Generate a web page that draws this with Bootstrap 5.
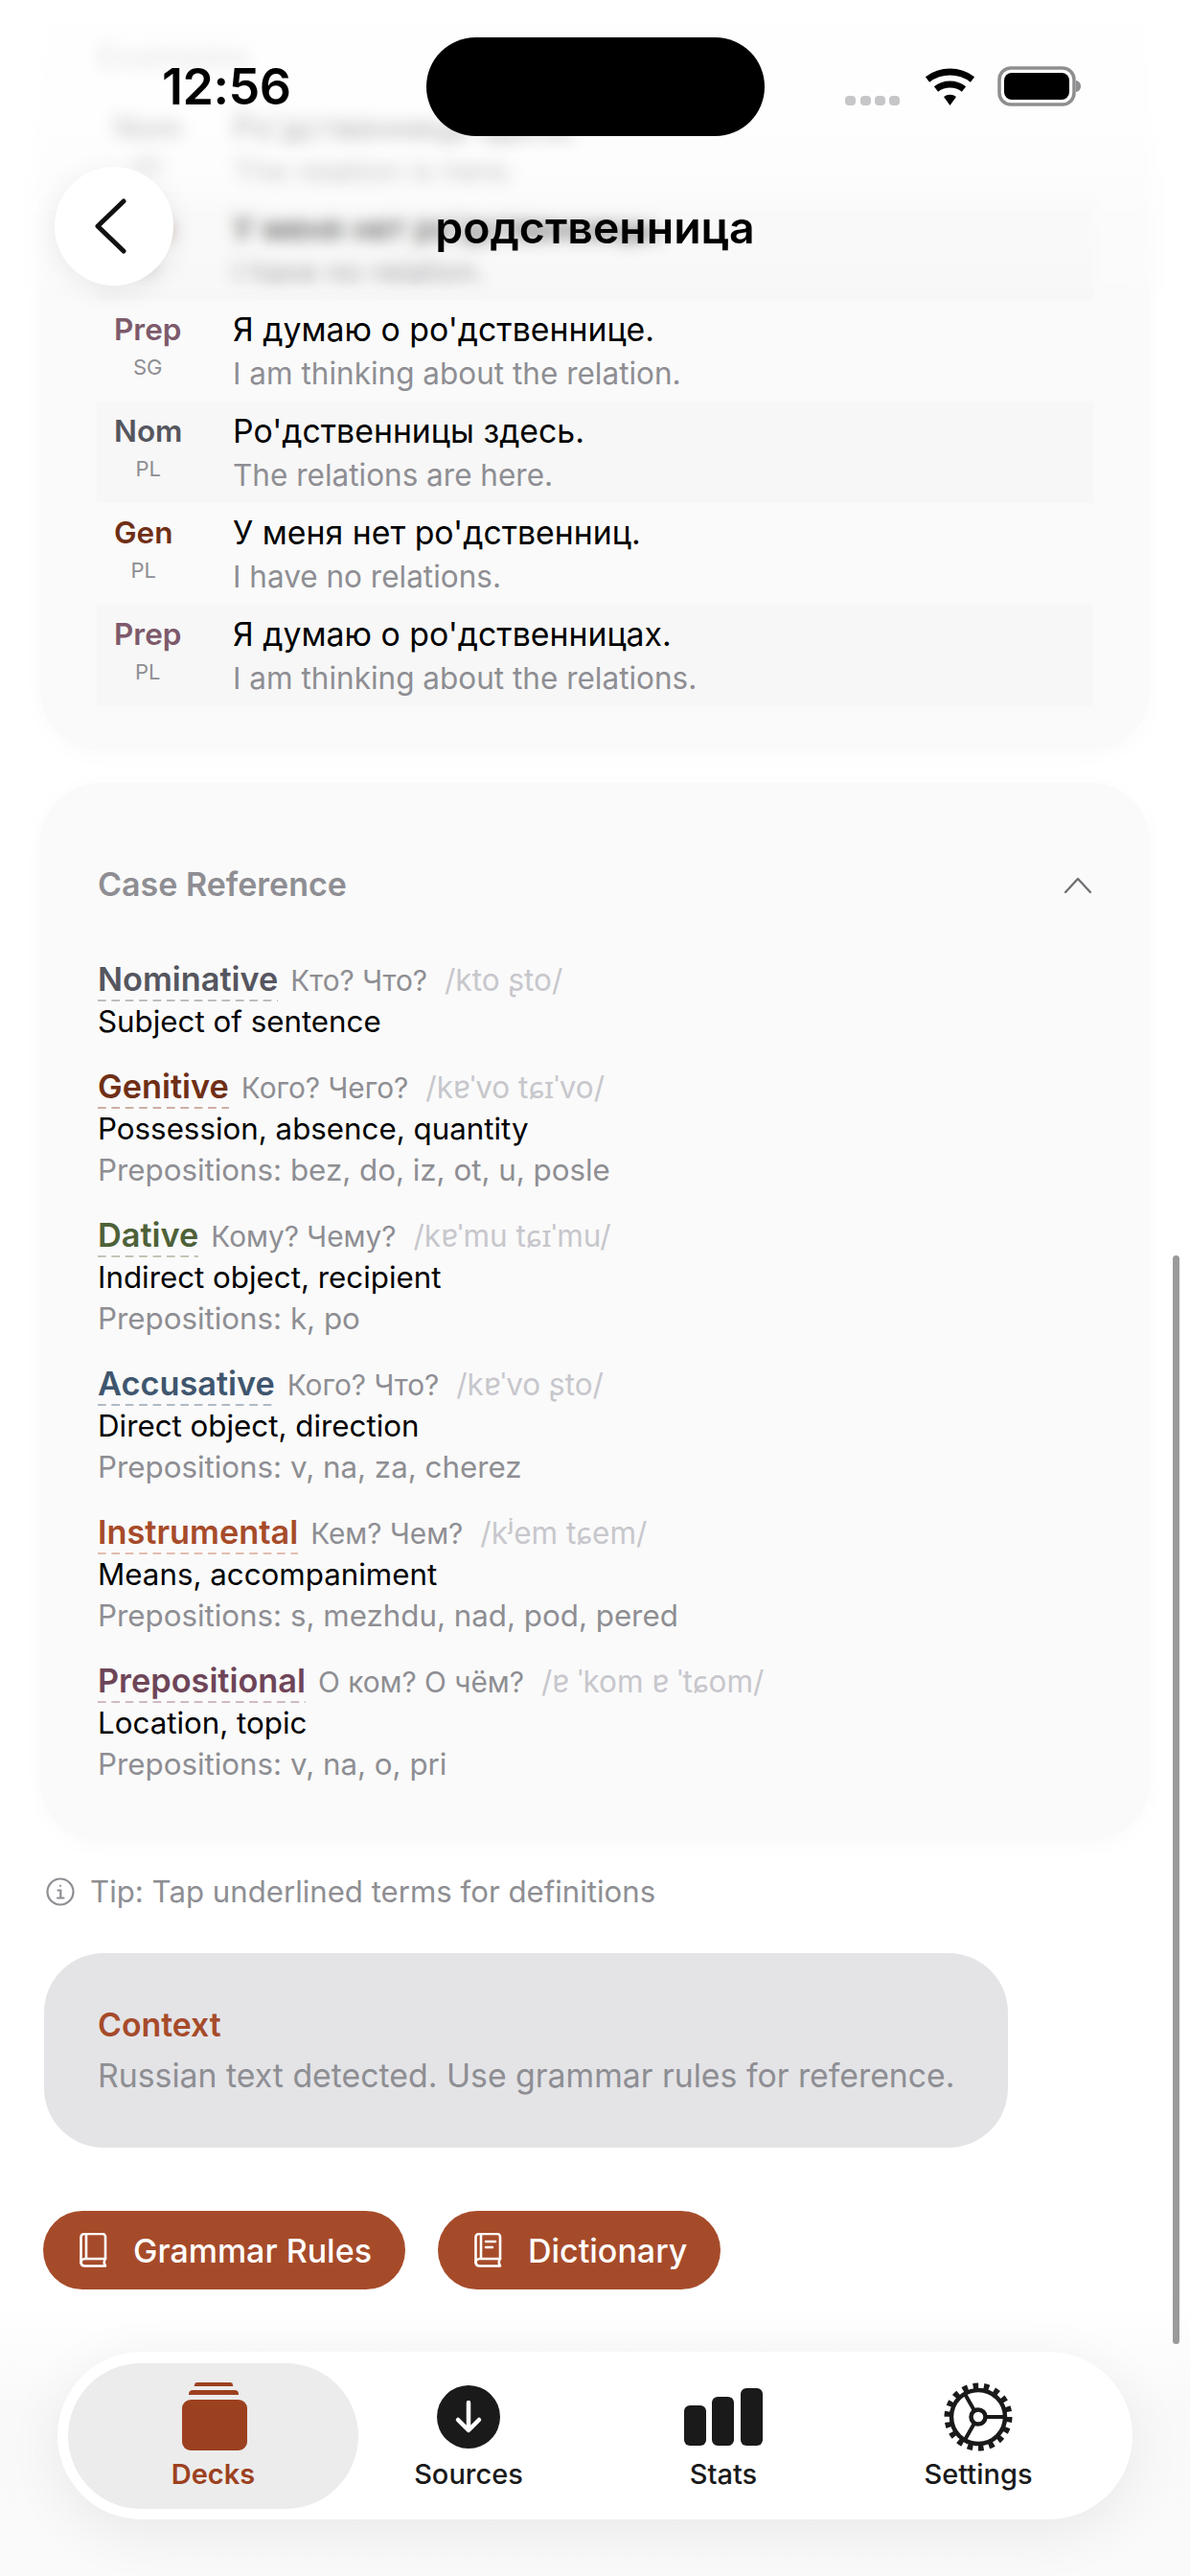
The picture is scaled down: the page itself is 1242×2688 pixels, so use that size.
<!DOCTYPE html>
<html lang="en">
<head>
<meta charset="utf-8">
<title>родственница</title>
<link href="https://cdn.jsdelivr.net/npm/bootstrap@5.3.0/dist/css/bootstrap.min.css" rel="stylesheet">
<style>
html,body{width:1242px;height:2688px;overflow:hidden;background:#fff;}
body{font-family:Inter,"Noto Sans",sans-serif;color:#000;position:relative;}
.scroll-pane{margin-top:-44px;padding:0 42px;}
.sheet{background:#fafafa;border-radius:62px;box-shadow:0 4px 24px rgba(0,0,0,.025);}
.sheet-ex{padding:82px 59px 46px 59px;}
.sheet-ref{margin-top:34px;padding:84px 60px 58px 60px;}
.sheet-title{font-size:34px;font-weight:600;line-height:44px;color:#8e8e93;}
.sheet-ex .sheet-title{padding-left:1px;height:63px;line-height:40px;}
.ex-row{height:106px;padding:9px 18px 0;}
.ex-row.shade{background:#f7f7f7;}
.ex-tag-col{width:124px;flex:none;}
.ex-tag{font-size:31.500px;font-weight:600;line-height:44px;}
.ex-num{font-size:22px;line-height:30px;color:#8e8e93;margin-top:2px;}
.ex-ru{font-size:33.800px;line-height:44px;}
.ex-en{font-size:31.500px;line-height:44px;color:#8e8e93;margin-top:2px;}
.c-nom{color:#55565f;--u:#bdbdc0;}
.c-gen{color:#6f2f16;--u:#cdaea3;}
.c-dat{color:#4e6138;--u:#bfc6b3;}
.c-acc{color:#3f566e;--u:#aebbc7;}
.c-ins{color:#a64b2a;--u:#e2bdae;}
.c-pre{color:#6e4558;--u:#cfbac4;}
.ex-tag.c-pre{color:#7d5a6b;}
.ref-list{margin-top:55px;gap:24px;}
.ref-head{line-height:44px;height:44px;white-space:nowrap;}
.ref-name{font-size:34.300px;font-weight:600;background:linear-gradient(90deg,var(--u) 60%,transparent 60%) 0 100%/14.400px 2.500px repeat-x;padding-bottom:3px;}
.ref-q{font-size:29.800px;color:#8e8e93;margin-left:13px;}
.ref-ipa{font-size:31.500px;color:#c7c7cc;margin-left:18px;}
.ref-def{font-size:31.300px;line-height:44px;}
.ref-prep{font-size:31.300px;line-height:43px;color:#8e8e93;}
.tip-line{margin:31px 0 0 6px;font-size:31.200px;line-height:44px;color:#8e8e93;gap:16px;}
.ctx-box{margin:42px 0 0 4px;width:1006px;height:203px;padding:53px 56px;background:#e4e4e7;border-radius:62px;}
.ctx-title{font-size:33.800px;font-weight:600;line-height:44px;color:#a64b2a;}
.ctx-text{font-size:33.800px;line-height:44px;color:#8e8e93;margin-top:9px;white-space:nowrap;}
.act-row{margin:66px 0 0 3px;gap:34px;}
.act-btn{--bs-btn-bg:#a64b2a;--bs-btn-hover-bg:#a64b2a;--bs-btn-color:#fff;--bs-btn-hover-color:#fff;--bs-btn-border-width:0;height:82px;border-radius:41px;padding:0 35px 0 38px;gap:27px;font-size:34px;font-weight:500;}
.status{position:absolute;left:0;top:0;width:100%;height:150px;z-index:5;}
.status-time{position:absolute;left:169px;top:64px;font-size:52px;font-weight:600;line-height:54px;letter-spacing:-.5px;}
.island{position:absolute;left:445px;top:39px;width:353px;height:103px;border-radius:52px;background:#000;}
.status-icons{position:absolute;left:880px;top:68px;}
.frost{position:absolute;left:0;top:0;width:100%;height:316px;z-index:3;-webkit-backdrop-filter:blur(8px);backdrop-filter:blur(8px);background:linear-gradient(rgba(255,255,255,.86),rgba(255,255,255,.74) 40%,rgba(255,255,255,.3) 72%,rgba(255,255,255,.15));-webkit-mask-image:linear-gradient(#000 93%,transparent);mask-image:linear-gradient(#000 93%,transparent);}
.back-btn{position:absolute;left:57px;top:174px;width:124px;height:124px;border-radius:50%;background:#fff;z-index:5;box-shadow:0 6px 30px rgba(0,0,0,.07);}
.back-ico{margin-right:8px;}
.page-title{position:absolute;left:0;width:100%;top:209px;z-index:5;font-size:46.400px;line-height:56px;font-weight:600;}
.scroll-thumb{position:absolute;left:1224px;top:1310px;width:7px;height:1136px;background:#9a9a9a;border-radius:4px;z-index:6;}
.dock-fade{position:absolute;left:0;right:0;top:2400px;height:288px;background:linear-gradient(rgba(255,255,255,0),#f9f9f9 40%,#fafafa);z-index:4;}
.dock{position:absolute;left:60px;top:2454px;width:1122px;height:175px;background:#fff;border-radius:88px;box-shadow:0 14px 60px rgba(0,0,0,.07);z-index:5;padding:12px 29px 11px 30px;}
.dock-tab{width:266px;flex:none;border-radius:76px;color:#1a1a1a;font-size:29px;font-weight:500;line-height:34px;text-decoration:none;position:relative;}
.dock-tab.on{color:#9c4120;background:#ececec;margin:0 -18px 0 -19px;width:303px;}
.dock-ico{height:84px;margin-top:12px;}
.dock-lbl{margin-top:3px;}
</style>
</head>
<body>

<main class="scroll-pane">
  <section class="sheet sheet-ex">
    <div class="sheet-title">Examples</div>
    <div class="ex-row d-flex"><div class="ex-tag-col"><div class="d-inline-flex flex-column align-items-center"><span class="ex-tag c-nom">Nom</span><span class="ex-num">SG</span></div></div><div><div class="ex-ru">Ро'дственница здесь.</div><div class="ex-en">The relation is here.</div></div></div>
    <div class="ex-row shade d-flex"><div class="ex-tag-col"><div class="d-inline-flex flex-column align-items-center"><span class="ex-tag c-gen">Gen</span><span class="ex-num">SG</span></div></div><div><div class="ex-ru">У меня нет ро'дственницы.</div><div class="ex-en">I have no relation.</div></div></div>
    <div class="ex-row d-flex"><div class="ex-tag-col"><div class="d-inline-flex flex-column align-items-center"><span class="ex-tag c-pre">Prep</span><span class="ex-num">SG</span></div></div><div><div class="ex-ru">Я думаю о ро'дственнице.</div><div class="ex-en">I am thinking about the relation.</div></div></div>
    <div class="ex-row shade d-flex"><div class="ex-tag-col"><div class="d-inline-flex flex-column align-items-center"><span class="ex-tag c-nom">Nom</span><span class="ex-num">PL</span></div></div><div><div class="ex-ru">Ро'дственницы здесь.</div><div class="ex-en">The relations are here.</div></div></div>
    <div class="ex-row d-flex"><div class="ex-tag-col"><div class="d-inline-flex flex-column align-items-center"><span class="ex-tag c-gen">Gen</span><span class="ex-num">PL</span></div></div><div><div class="ex-ru">У меня нет ро'дственниц.</div><div class="ex-en">I have no relations.</div></div></div>
    <div class="ex-row shade d-flex"><div class="ex-tag-col"><div class="d-inline-flex flex-column align-items-center"><span class="ex-tag c-pre">Prep</span><span class="ex-num">PL</span></div></div><div><div class="ex-ru">Я думаю о ро'дственницах.</div><div class="ex-en">I am thinking about the relations.</div></div></div>
  </section>

  <section class="sheet sheet-ref">
    <div class="d-flex justify-content-between align-items-center">
      <div class="sheet-title">Case Reference</div>
      <svg width="30" height="22" viewBox="0 0 30 22" fill="none" stroke="#6e6e73" stroke-width="2.300" stroke-linecap="round" stroke-linejoin="round"><path d="M2 19 15 5l13 14"/></svg>
    </div>
    <div class="ref-list d-flex flex-column">
      <div class="c-nom"><div class="ref-head"><span class="ref-name">Nominative</span><span class="ref-q">Кто? Что?</span><span class="ref-ipa">/kto ʂto/</span></div><div class="ref-def text-black">Subject of sentence</div></div>
      <div class="c-gen"><div class="ref-head"><span class="ref-name">Genitive</span><span class="ref-q">Кого? Чего?</span><span class="ref-ipa">/kɐˈvo tɕɪˈvo/</span></div><div class="ref-def text-black">Possession, absence, quantity</div><div class="ref-prep">Prepositions: bez, do, iz, ot, u, posle</div></div>
      <div class="c-dat"><div class="ref-head"><span class="ref-name">Dative</span><span class="ref-q">Кому? Чему?</span><span class="ref-ipa">/kɐˈmu tɕɪˈmu/</span></div><div class="ref-def text-black">Indirect object, recipient</div><div class="ref-prep">Prepositions: k, po</div></div>
      <div class="c-acc"><div class="ref-head"><span class="ref-name">Accusative</span><span class="ref-q">Кого? Что?</span><span class="ref-ipa">/kɐˈvo ʂto/</span></div><div class="ref-def text-black">Direct object, direction</div><div class="ref-prep">Prepositions: v, na, za, cherez</div></div>
      <div class="c-ins"><div class="ref-head"><span class="ref-name">Instrumental</span><span class="ref-q">Кем? Чем?</span><span class="ref-ipa">/kʲem tɕem/</span></div><div class="ref-def text-black">Means, accompaniment</div><div class="ref-prep">Prepositions: s, mezhdu, nad, pod, pered</div></div>
      <div class="c-pre"><div class="ref-head"><span class="ref-name">Prepositional</span><span class="ref-q">О ком? О чём?</span><span class="ref-ipa">/ɐ ˈkom ɐ ˈtɕom/</span></div><div class="ref-def text-black">Location, topic</div><div class="ref-prep">Prepositions: v, na, o, pri</div></div>
    </div>
  </section>

  <div class="tip-line d-flex align-items-center">
    <svg width="30" height="30" viewBox="0 0 30 30" fill="none" stroke="#8e8e93" stroke-width="2.200" stroke-linecap="round"><circle cx="15" cy="15" r="13.500"/><path d="M12.500 13.500H15.300V21M12 21.500h6.500"/><circle cx="15" cy="8.800" r="1.100" fill="#8e8e93" stroke="none"/></svg>
    <span>Tip: Tap underlined terms for definitions</span>
  </div>

  <div class="ctx-box">
    <div class="ctx-title">Context</div>
    <div class="ctx-text">Russian text detected. Use grammar rules for reference.</div>
  </div>

  <div class="act-row d-flex">
    <button class="btn act-btn d-inline-flex align-items-center" type="button">
      <svg width="29" height="36" viewBox="0 0 29 36" fill="none" stroke="#fff" stroke-width="2.600" stroke-linecap="round" stroke-linejoin="round"><path d="M27 27V4a3 3 0 0 0-3-3H5a3.500 3.500 0 0 0-3.500 3.500V31"/><path d="M1.500 31a4 4 0 0 1 4-4H27M27 27c-1.500 2-1.500 5 0 7.500H5.500a4 4 0 0 1-4-3.500"/><path d="M7 2v24"/></svg>
      <span>Grammar Rules</span>
    </button>
    <button class="btn act-btn d-inline-flex align-items-center" type="button">
      <svg width="29" height="36" viewBox="0 0 29 36" fill="none" stroke="#fff" stroke-width="2.600" stroke-linecap="round" stroke-linejoin="round"><path d="M27 27V4a3 3 0 0 0-3-3H5a3.500 3.500 0 0 0-3.500 3.500V31"/><path d="M1.500 31a4 4 0 0 1 4-4H27M27 27c-1.500 2-1.500 5 0 7.500H5.500a4 4 0 0 1-4-3.500"/><path d="M7 2v24M12 9h10M12 15h7"/></svg>
      <span>Dictionary</span>
    </button>
  </div>
</main>

<div class="frost"></div>

<div class="status">
  <div class="status-time">12:56</div>
  <div class="island"></div>
  <svg class="status-icons" width="250" height="44" viewBox="0 0 250 44">
    <g fill="#c6c6c8"><rect x="2" y="32" width="11" height="10" rx="4"/><rect x="18" y="32" width="11" height="10" rx="4"/><rect x="33" y="32" width="11" height="10" rx="4"/><rect x="48" y="32" width="11" height="10" rx="4"/></g>
    <g fill="none" stroke="#000" stroke-width="7"><path d="M88 15a39 39 0 0 1 47 0"/><path d="M97 25a24 24 0 0 1 29 0"/></g>
    <path d="M105 33a11 11 0 0 1 13 0l-6.500 9z"/>
    <rect x="163" y="3" width="78" height="38" rx="12" fill="none" stroke="#8e8e90" stroke-width="3.500"/>
    <rect x="168" y="8" width="68" height="28" rx="8"/>
    <path d="M243 16c3 .5 5 3 5 6s-2 5.500-5 6z" fill="#8e8e90"/>
  </svg>
</div>

<button class="back-btn btn p-0 border-0 d-flex align-items-center justify-content-center" type="button" aria-label="Back">
  <svg class="back-ico" width="36" height="58" viewBox="0 0 36 58" fill="none" stroke="#111" stroke-width="5" stroke-linecap="round" stroke-linejoin="round"><path d="M32 3 5 29l27 26"/></svg>
</button>
<h1 class="page-title text-center m-0">родственница</h1>

<div class="scroll-thumb"></div>
<div class="dock-fade"></div>

<nav class="dock d-flex">
  <a class="dock-tab on d-flex flex-column align-items-center" href="#">
    <svg class="dock-ico" width="70" height="84" viewBox="0 0 70 84" fill="#9c4120"><path d="M15 11c0-2 1-3 3-3h34c2 0 3 1 3 3l.5 1h-41z"/><path d="M9 20c0-3 2-4 4-4h44c2 0 4 1 4 4v1H9z"/><rect x="2" y="26" width="68" height="53" rx="9"/></svg>
    <span class="dock-lbl fw-semibold">Decks</span>
  </a>
  <a class="dock-tab d-flex flex-column align-items-center" href="#">
    <svg class="dock-ico" width="70" height="84" viewBox="0 0 70 84"><circle cx="35" cy="44" r="33" fill="#1a1a1a"/><path d="M35 29v28M24 47l11 11 11-11" fill="none" stroke="#fff" stroke-width="4.500" stroke-linecap="round" stroke-linejoin="round"/></svg>
    <span class="dock-lbl">Sources</span>
  </a>
  <a class="dock-tab d-flex flex-column align-items-center" href="#">
    <svg class="dock-ico" width="84" height="84" viewBox="0 0 84 84" fill="#1a1a1a"><rect x="1" y="32" width="23" height="42" rx="6"/><rect x="30" y="23" width="23" height="51" rx="6"/><rect x="60" y="14" width="23" height="60" rx="6"/></svg>
    <span class="dock-lbl">Stats</span>
  </a>
  <a class="dock-tab d-flex flex-column align-items-center" href="#">
    <svg class="dock-ico" width="76" height="84" viewBox="0 0 76 84" fill="none" stroke="#1a1a1a"><circle cx="38" cy="44" r="28" stroke-width="4.500"/><circle cx="38" cy="44" r="32" stroke-width="7" stroke-dasharray="5.500 5.670"/><circle cx="38" cy="44" r="7.500" stroke-width="4.500"/><path d="M45.500 44H66M34 37.500 24 20M34 50.500 24 68" stroke-width="4"/></svg>
    <span class="dock-lbl">Settings</span>
  </a>
</nav>

<script src="https://cdn.jsdelivr.net/npm/bootstrap@5.3.0/dist/js/bootstrap.bundle.min.js"></script>
</body>
</html>
